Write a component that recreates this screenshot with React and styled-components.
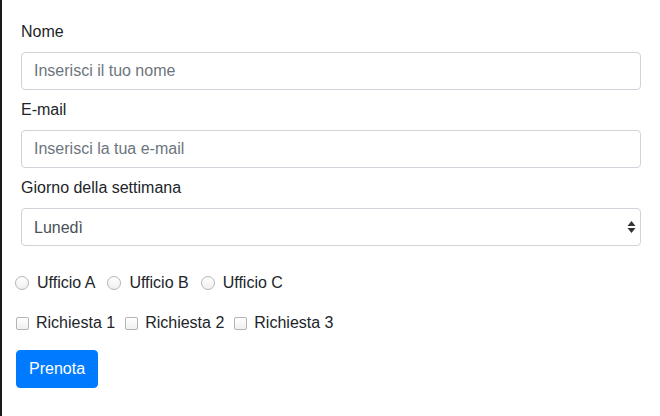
import React from 'react';
import styled, { createGlobalStyle } from 'styled-components';

const GlobalStyle = createGlobalStyle`
  html, body {
    margin: 0;
    padding: 0;
    background: #fff;
  }
  body {
    font-family: "Liberation Sans", Arial, sans-serif;
    font-size: 16px;
    line-height: 24px;
    color: #212529;
    border-left: 2px solid #1a1a1a;
    min-height: 416px;
    box-sizing: border-box;
  }
`;

const Form = styled.form`
  padding: 20px 19px 0 13px;
`;

const FieldGroup = styled.div`
  padding-left: 6px;
  margin-bottom: 8px;
`;

const Label = styled.label`
  display: block;
  margin-bottom: 8px;
  line-height: 24px;
`;

const TextInput = styled.input`
  display: block;
  width: 100%;
  height: 38px;
  box-sizing: border-box;
  padding: 6px 12px;
  font-family: inherit;
  font-size: 16px;
  color: #495057;
  background: #fff;
  border: 1px solid #ced4da;
  border-radius: 4px;
  outline: none;

  &::placeholder {
    color: #6c757d;
  }
`;

const SelectWrap = styled.div`
  position: relative;
`;

const Select = styled.select`
  display: block;
  width: 100%;
  height: 38px;
  box-sizing: border-box;
  padding: 6px 12px;
  font-family: inherit;
  font-size: 16px;
  color: #495057;
  background: #fff;
  border: 1px solid #ced4da;
  border-radius: 4px;
  appearance: none;
  -webkit-appearance: none;
  outline: none;
`;

const Arrows = styled.svg`
  position: absolute;
  right: 5px;
  top: 13px;
  pointer-events: none;
`;

const ChoiceRow = styled.div`
  display: flex;
  align-items: center;
  gap: ${p => p.$gap}px;
  margin-top: ${p => p.$top}px;
`;

const Choice = styled.label`
  display: flex;
  align-items: center;
  gap: ${p => p.$gap || 7}px;
  line-height: 24px;
`;

const Radio = styled.span`
  width: 14px;
  height: 14px;
  box-sizing: border-box;
  border: 1px solid #b4b4b4;
  border-radius: 50%;
  background: linear-gradient(#fff, #f0f0f0);
`;

const Check = styled.span`
  width: 13px;
  height: 13px;
  box-sizing: border-box;
  border: 1px solid #b4b4b4;
  border-radius: 2px;
  background: linear-gradient(#fff, #f0f0f0);
  margin-left: 1px;
`;

const Button = styled.button`
  margin-top: 15px;
  margin-left: 1px;
  height: 38px;
  padding: 0 12px;
  font-family: inherit;
  font-size: 16px;
  color: #fff;
  background: #007bff;
  border: 1px solid #007bff;
  border-radius: 4px;
`;

const offices = ['Ufficio A', 'Ufficio B', 'Ufficio C'];
const requests = ['Richiesta 1', 'Richiesta 2', 'Richiesta 3'];

export default function App() {
  return (
    <>
      <GlobalStyle />
      <Form onSubmit={e => e.preventDefault()}>
        <FieldGroup>
          <Label>Nome</Label>
          <TextInput placeholder="Inserisci il tuo nome" />
        </FieldGroup>
        <FieldGroup>
          <Label>E-mail</Label>
          <TextInput placeholder="Inserisci la tua e-mail" />
        </FieldGroup>
        <FieldGroup>
          <Label>Giorno della settimana</Label>
          <SelectWrap>
            <Select defaultValue="Lunedì">
              <option>Lunedì</option>
              <option>Martedì</option>
              <option>Mercoledì</option>
            </Select>
            <Arrows width="9" height="12" viewBox="0 0 9 12">
              <path d="M4.5 0 L8.5 5 L0.5 5 Z" fill="#333" />
              <path d="M0.5 7 L8.5 7 L4.5 12 Z" fill="#333" />
            </Arrows>
          </SelectWrap>
        </FieldGroup>
        <ChoiceRow $top={25} $gap={12}>
          {offices.map(o => (
            <Choice key={o} $gap={8}>
              <Radio />
              {o}
            </Choice>
          ))}
        </ChoiceRow>
        <ChoiceRow $top={16} $gap={9}>
          {requests.map(r => (
            <Choice key={r}>
              <Check />
              {r}
            </Choice>
          ))}
        </ChoiceRow>
        <Button type="submit">Prenota</Button>
      </Form>
    </>
  );
}
